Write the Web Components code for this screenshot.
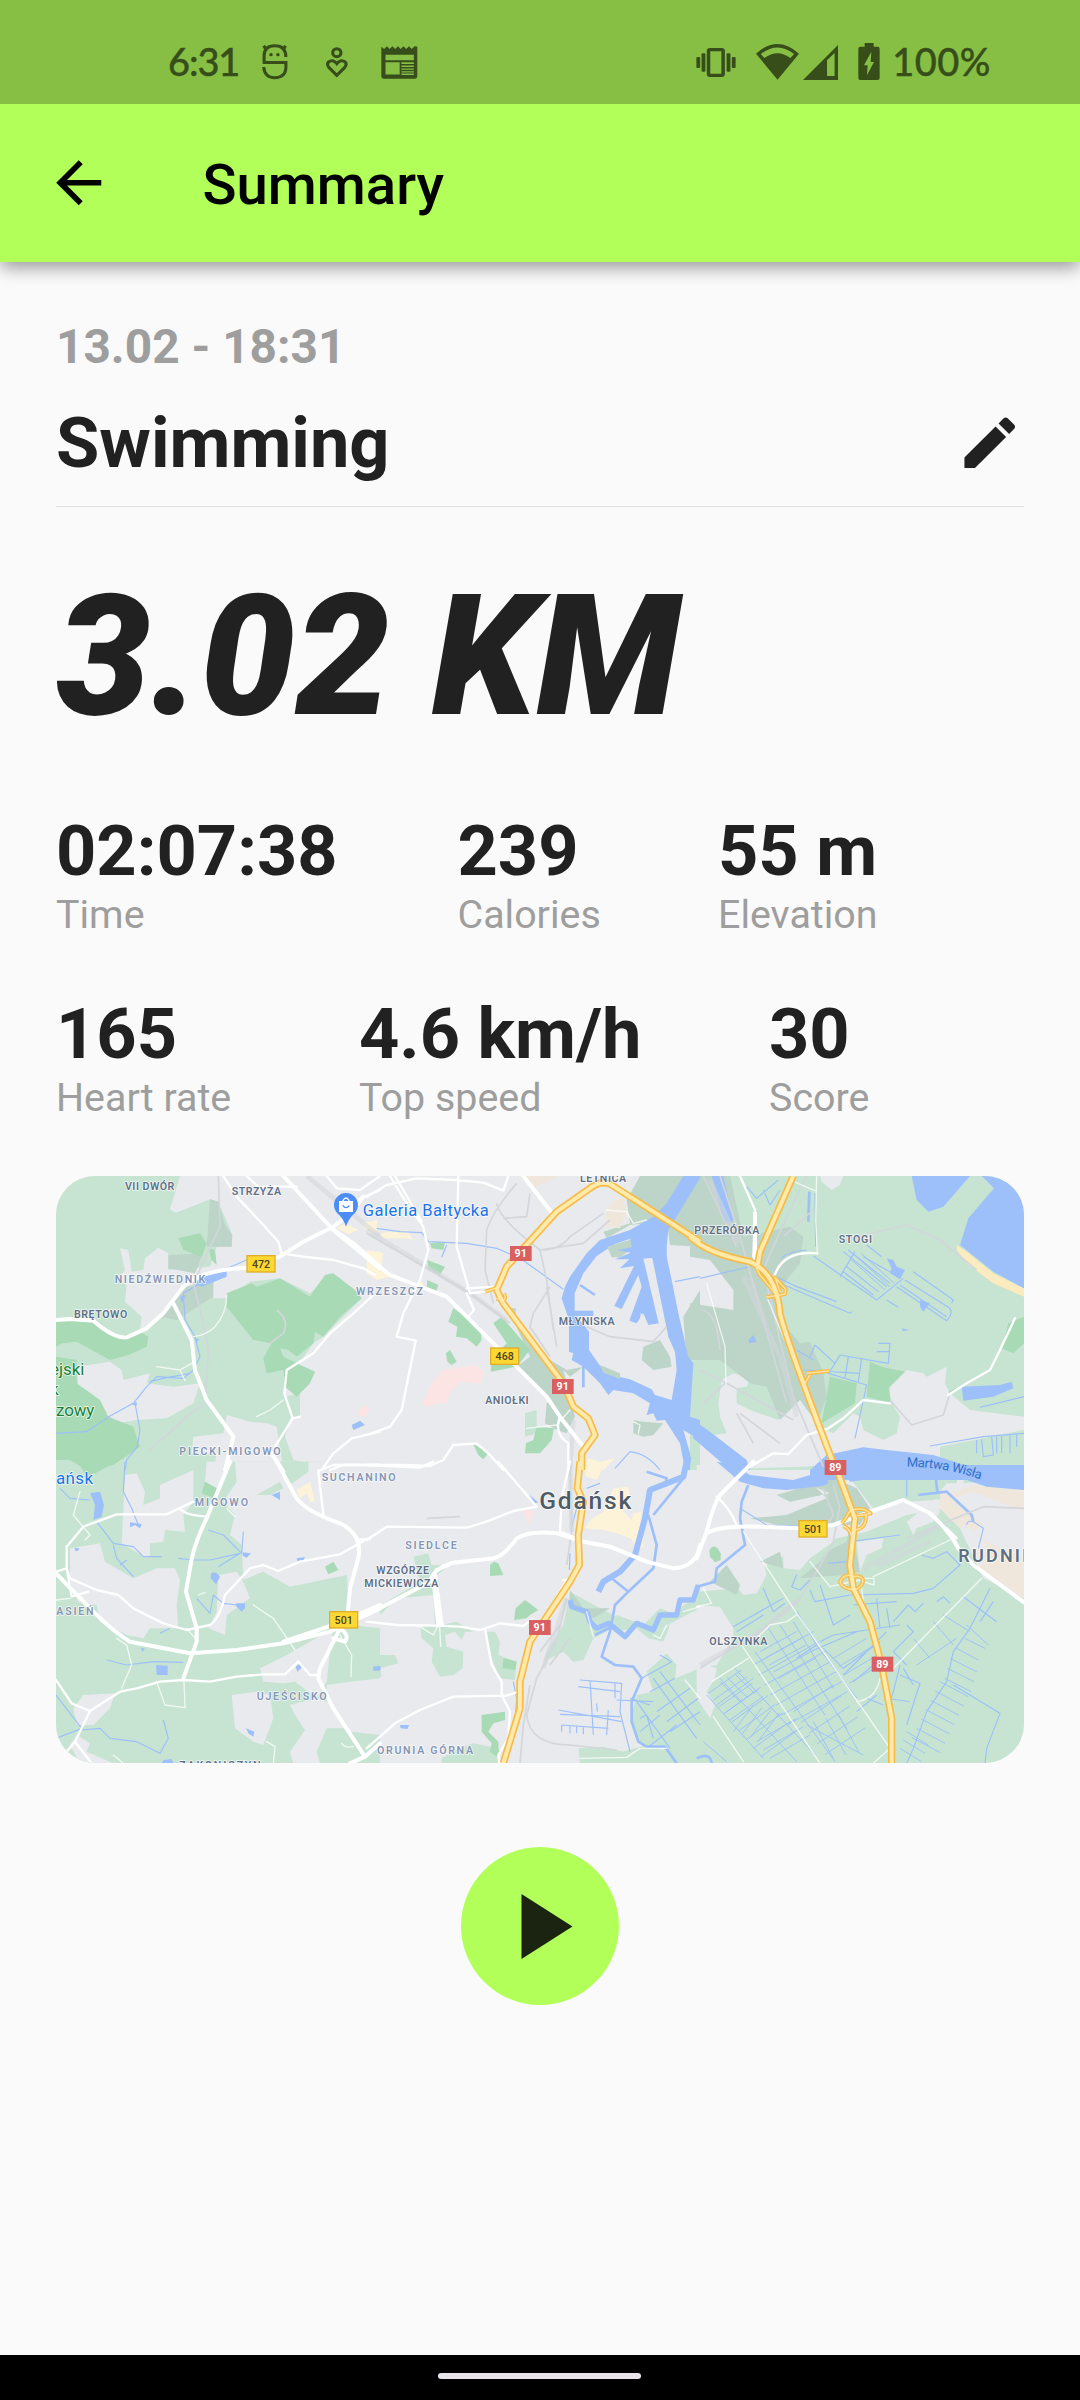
<!DOCTYPE html>
<html lang="en">
<head>
<meta charset="utf-8">
<title>Summary</title>
<style>
html,body{margin:0;padding:0;background:#fafafa}
body{width:1080px;height:2400px;overflow:hidden;font-family:Roboto,"Liberation Sans",sans-serif;color:#212121}
</style>
</head>
<body>
<workout-page></workout-page>
<script>
const define = (name, css, html) => customElements.define(name, class extends HTMLElement {
  constructor() {
    super();
    this.attachShadow({ mode: 'open' }).innerHTML = `<style>${css}</style>${typeof html === 'function' ? html(this) : html}`;
  }
});

define('status-bar', `
:host{display:flex;align-items:flex-start;height:104px;background:#86bf44;color:#374e1b;box-sizing:border-box;padding:0 89px 0 168px;font:500 38px/46px Lato,"Open Sans",sans-serif;position:relative;z-index:1}
svg{display:block;fill:#374e1b;flex:none}
.o{fill:none;stroke:#374e1b;stroke-width:9}
.time{margin-top:38px;width:69px;letter-spacing:-1.1px;white-space:nowrap;-webkit-text-stroke:.4px #374e1b}
.pct{margin-top:38px;margin-left:12px;letter-spacing:.5px;-webkit-text-stroke:.4px #374e1b}
.sp{flex:1}
`, `
<span class="time">6:31</span>
<svg style="margin:43px 0 0 24px" width="28" height="37" viewBox="759 130 81 111" preserveAspectRatio="none"><path class="o" d="M768 189V168Q768 138 799 138Q831 138 831 172M764 188.500H831V205Q829 234 799 234Q769 234 767 202"/><path class="o" stroke-width="10" d="M774 150L767 138M823 150L830 138"/><circle cx="788" cy="165" r="5"/><circle cx="808" cy="165" r="5"/></svg>
<svg style="margin:46px 0 0 36px" width="24" height="32" viewBox="944 137 70 96" preserveAspectRatio="none"><circle class="o" cx="978.500" cy="157" r="12"/><path class="o" d="M978.500 225L956 202Q948 193 954 185Q967 175 978.500 190Q990 175 1003 185Q1009 193 1001 202Z"/></svg>
<svg style="margin:46px 0 0 32px" width="37" height="33" viewBox="1105 138 107 97" preserveAspectRatio="none"><path fill-rule="evenodd" d="M1106 140L1114 147L1122 139L1130 147L1138 139L1146 147L1154 139L1162 147L1170 139L1178 147L1186 139L1194 147L1202 139L1210 140V226Q1210 234 1202 234H1114Q1106 234 1106 226ZM1118 164V180H1200V164ZM1118 186V222H1159V186ZM1164 186V191H1200V186ZM1164 195V200H1200V195ZM1164 204V208H1200V204ZM1164 212V216H1200V212ZM1164 219V223H1200V219Z"/></svg>
<span class="sp"></span>
<svg style="margin:48px 0 0 0" width="40" height="29" viewBox="455 144 115 87" preserveAspectRatio="none"><rect class="o" style="stroke-width:10" x="491" y="149" width="42" height="77" rx="4"/><rect x="471" y="160" width="11" height="55" rx="3"/><rect x="456" y="171" width="11" height="33" rx="3"/><rect x="543" y="160" width="11" height="55" rx="3"/><rect x="558" y="171" width="11" height="33" rx="3"/></svg>
<svg style="margin:44px 0 0 20px" width="43" height="36" viewBox="629 132 124 108" preserveAspectRatio="none"><path fill-rule="evenodd" d="M629 161Q691 103 753 161L691 239ZM643 162L653 174Q691 145 728 174L739 162Q691 123 643 162Z"/></svg>
<svg style="margin:45px 0 0 4px" width="35" height="35" viewBox="763 135 102 105" preserveAspectRatio="none"><path fill-rule="evenodd" d="M763 240L865 135V240ZM833 181V228H855V159Z"/></svg>
<svg style="margin:43px 0 0 20px" width="22" height="37" viewBox="922 129 66 111" preserveAspectRatio="none"><path fill-rule="evenodd" d="M942 129H969V140H981Q987 140 987 147V233Q987 240 981 240H929Q923 240 923 233V147Q923 140 929 140H942ZM962 155L940 196H951L949 226L970 186H960Z"/></svg>
<span class="pct">100%</span>
`);

define('app-bar', `
:host{display:flex;align-items:center;height:157.5px;box-sizing:border-box;padding:0 0 0 45px;background:#b2ff59;color:#000;box-shadow:0 7px 16px -1px rgba(0,0,0,.38);position:relative}
svg{width:67.5px;height:67.5px;display:block}
h1{margin:0 0 0 90px;font:500 56.25px/66px Roboto,sans-serif;position:relative;top:2px}
`, `
<svg viewBox="0 0 24 24"><path d="M20 11H7.83l5.590-5.590L12 4l-8 8 8 8 1.410-1.410L7.830 13H20v-2z"/></svg>
<h1><slot></slot></h1>`);

define('activity-head', `
:host{display:block;border-bottom:1.4px solid #e0e0e0;height:186px}
.date{font:700 47.8px/54px Roboto,sans-serif;color:#9e9e9e}
.row{display:flex;justify-content:space-between;align-items:center;margin-top:29px}
h2{margin:0;font:700 70.300px/80px Roboto,sans-serif}
svg{width:67.500px;height:67.500px;fill:#212121;margin-right:1px}
`, `
<div class="date"><slot name="date"></slot></div>
<div class="row"><h2><slot></slot></h2><svg viewBox="0 0 24 24"><path d="M3 17.250V21h3.750L17.810 9.940l-3.750-3.750L3 17.250zM20.710 7.040c.390-.390.390-1.020 0-1.410l-2.340-2.340c-.390-.390-1.020-.390-1.410 0l-1.830 1.830 3.750 3.750 1.830-1.830z"/></svg></div>`);

define('stat-item', `
:host{display:block;white-space:nowrap;color:#9e9e9e;font:400 39.4px/46px Roboto,sans-serif}
b{display:block;font:700 70.300px/80px Roboto,sans-serif;color:#212121;margin-bottom:1.6px}
`, el => `<b>${el.getAttribute('value')}</b><slot></slot>`);

/* The map is drawn on six sheets, three to a row; each key names the sheet its outlines belong to. */
const SHEETS = { A: [0, 0], B: [960, 0], C: [1950, 0], D: [0, 885], E: [960, 885], F: [1950, 885] };
const hatch = (x, y, dx, dy, n, sx, sy) => Array.from({ length: n }, (_, i) => `M${x + sx * i} ${y + sy * i}l${dx} ${dy}`).join('');
const HIGHWAY = {
  B: 'M635 900V850L675 795L655 745L610 710L580 640L400 400L380 360L410 290L460 235L560 125L660 55Q690 30 720 42L850 125L990 215',
  C: 'M-30 200Q20 250 150 275Q230 310 240 430Q255 500 400 880M280 18L180 245L172 290',
  E: 'M630 -10L622 70L640 110L625 210L628 300L600 350L480 530L450 650V730L400 895',
  F: 'M405 0L465 160L450 300L460 370L510 470L545 600L575 760V895'
};
const RAMPS = {
  B: 'M345 365L385 352M380 385Q415 400 402 370',
  C: 'M165 285L180 315L230 375M200 382L255 372L257 358L225 322L240 365M320 610L388 603M308 650L330 615',
  F: 'M425 175Q440 160 448 140Q480 120 512 145Q475 155 470 150M430 183Q450 190 455 215M498 150Q500 190 465 195M458 332Q428 325 420 352Q430 372 462 374M458 335Q490 330 489 350Q480 373 462 374'
};
const LAYERS = [
  ['land green', {
    A: 'M18 18H390L360 118L378 128L480 88L505 95L545 190V230H500L480 290L355 300L355 250L325 233L285 265L280 300L245 305L235 240L210 235L225 300L200 330L230 345L225 395L275 440L270 480L320 450L370 400L490 380L530 375L600 335L690 325L780 370L840 310L935 385L860 460L820 500L790 520L740 590L710 600L700 680L750 670V740L720 745L705 800L730 870L780 880L775 900H700L680 770L650 760L600 755L530 735L520 790L430 800L425 850L500 855L490 900H18Z',
    B: 'M465 730L500 720V790L465 800ZM930 650L990 560V740Z',
    C: 'M-30 18H972V900H-30V560L100 560L130 500L90 300L30 210L-30 180Z',
    D: 'M18 -10H990V895H18Z',
    E: 'M130 275L175 265L185 300L240 300L190 340L215 480L260 470L310 500L285 500L275 525L255 500L225 510L230 545L280 560L278 610L250 630L210 635L185 590L190 550L155 520L150 485L195 480L190 390L80 400L10 470L-10 465L0 440L100 380L150 350ZM-10 570L75 570L85 595L30 610L35 635L-10 640ZM345 500L375 500L390 530L385 570L440 590L435 645L390 640L365 580ZM215 880L270 850L310 835L385 850L390 900H215ZM600 380L690 430L740 455L730 490L670 520L640 585L610 590L580 560L520 590L530 560L580 480ZM740 450L820 480L870 430L920 450L940 420L990 400V430L930 460L860 500L900 480L880 530L835 520L800 490L730 500ZM830 620L890 565L920 600L915 640L990 610V900H920L880 850L820 850L780 770L800 690L850 680ZM625 850L700 845L760 860L830 840L900 860L920 895H630Z',
    F: 'M-10 380L120 370L180 310L320 240L500 200L620 150L780 120L800 -10H972V895H-10V610L50 600L100 520L80 460L-10 420ZM450 40L760 -10L780 100L620 110L520 130Z'
  }],
  ['land bare', {
    A: 'M80 590L180 575L215 600L220 630L300 610L290 640L370 650L450 640L430 700L350 745L260 750L170 765L140 690L85 650ZM415 330L490 340V385H530L600 335L530 290L470 290Z',
    B: 'M910 230L990 240V350L950 430L920 380Z',
    C: 'M0 270L50 290L110 355L100 420L60 420L20 340L0 350ZM65 630L100 610L150 625L140 650L110 655L110 700L150 720L235 750L255 680L270 700L300 690L340 700L360 770L400 790L460 730L480 740L490 780L550 810L590 790L600 740L570 690V650L620 600L670 610L680 620L740 590L735 640L750 670L810 720L972 740V780L720 830V870L300 890L0 900V800L80 790L60 740L55 700ZM360 18H430L420 45L395 60L365 35Z',
    D: 'M225 30L260 25L285 80L280 120L330 100L330 60L430 15L430 110L400 150L405 200L345 195L340 230L300 235L300 270L290 280L215 235ZM60 250L150 235L165 290L250 340L320 310L375 310L390 345L380 420L385 490L300 490L280 520L230 510L150 470L140 420L85 410L60 350ZM505 330L560 320L580 350L600 400L530 450L525 510L475 490L500 440ZM555 -10H990V490L900 480L890 330L720 365L640 320L580 345L575 240L540 210L555 150L520 110L560 50ZM470 -10H550L500 70L465 50ZM850 490L710 570L630 610L640 650L700 655L735 650L800 700L830 650L840 560ZM830 660L900 650L990 640V810L900 800L830 700ZM545 690L620 680L660 690L670 760L640 840L610 830L555 790ZM720 720L800 700L860 720L900 790L830 790L800 860L810 895H730L720 860L765 795L735 750ZM100 690L195 685L180 730L130 780L80 780L70 730ZM60 840L80 810L120 835L110 860L190 895H90Z',
    F: 'M-10 0H80L140 60L200 70L240 110L390 90L380 130L300 160L440 180L400 230L330 280L300 315L250 310L250 265L190 290L200 330L170 385L130 390L100 350L80 300L-10 350ZM480 320L470 230L550 220L545 250L500 270ZM-10 420L60 425L100 490V520L50 560L20 600L50 610L45 640L20 680L45 720L30 760L-10 700ZM720 80L740 55L972 50V400L850 340L780 190L720 130ZM620 170L710 100L720 140L700 170L650 190L640 210Z'
  }],
  ['land green', { D: 'M690 -10H775L775 20L720 60L700 20ZM620 90L690 50L700 70L660 90Z' }],
  ['land port', {
    A: 'M480 88L505 95L525 165L547 195L545 230H470ZM355 255L460 250L435 310L355 295ZM330 440L410 350L490 330L490 380L450 405L380 450Z',
    B: 'M810 18H960L870 140L830 160L780 165L710 205L700 185L780 160L770 90ZM890 150L990 30V230L900 225ZM415 415H437V440L490 540L590 600L640 590L600 620L580 600L615 740L590 790L560 780L525 760L530 700L545 690L440 590L480 560ZM940 440L990 360V560L950 570Z',
    C: 'M-30 18H90L130 200L270 170L310 200L300 280L260 330L240 360L240 450L300 520L330 515L370 610L380 680L350 760L300 690L240 750L200 650L150 640L100 600L60 570L-30 570V400L100 420V360L30 270L-30 260Z',
    E: 'M600 375L640 430L720 430L670 460L600 420Z',
    F: 'M340 60L400 40L470 70L510 130L480 180L430 180L250 185L150 160L260 150L380 100ZM300 340L360 290L380 260L440 230L450 180L480 320L430 330ZM180 290L240 260L250 310ZM30 350L80 300L120 360L110 390ZM230 90L270 110L390 85L330 60Z'
  }],
  ['land wood', {
    A: 'M385 205L450 190L470 220L455 260L400 240ZM475 235L495 240L500 285L485 270ZM530 370L605 340L620 350L690 325L780 380L800 350L825 315L850 310L915 360L935 385L870 440L820 500L795 485L790 520L740 560L715 540L690 535L700 560L740 580L795 605L780 640L740 680L705 650L700 600L650 610L640 565L665 520L610 510L570 460L530 410ZM18 455L130 450L200 500L270 485L295 500L290 530L235 555L180 570L80 515L35 520L18 530ZM18 560L80 570V640L150 690L175 740L250 770L270 830L190 885L110 900L60 870H18Z',
    B: 'M180 220L225 215L220 240L185 235ZM172 270L225 290L210 315L175 300ZM172 330L205 345L200 362L170 355ZM250 415L330 470L335 510L320 530L290 505L258 500L262 470L235 455ZM370 460L395 440L480 540L440 590L362 605L365 570L410 520ZM228 550L240 540L260 575L245 585L232 575ZM500 770L552 775L545 810L510 850L465 850L468 820L490 810ZM308 820L355 850L340 868L325 855Z',
    C: 'M390 620L470 640L465 700L365 760ZM510 575L545 590L615 605L565 655L575 700L500 680ZM925 460L972 440V520L940 550L905 535ZM745 665L800 640L790 650L750 672Z',
    D: 'M85 -10L200 -10L110 38ZM465 50L500 70L490 98L455 85ZM825 305L850 290L865 315L835 328Z',
    E: 'M437 430L465 405L505 435L480 450L470 460L432 465ZM360 300L372 290L385 295L400 330L360 333ZM400 580L440 590L435 615L398 610ZM335 750L405 740V765L370 775L355 800L385 830L387 880L360 860L365 835L335 800Z',
    F: 'M28 255Q45 230 62 265V285L45 292L30 275Z'
  }],
  ['land hospital', {
    A: 'M925 720L945 705L960 715L945 740L925 735Z',
    B: 'M155 700L185 640L220 600L320 585L340 605L335 640L275 635L240 665L230 700L200 700L175 712Z',
    E: 'M462 135L495 138L475 180Z'
  }],
  ['land town', {
    A: 'M860 175L885 160L925 180L895 192ZM940 155L985 155L965 185L940 170ZM950 245H990V320L970 300Z',
    B: 'M-10 160L20 150V185L-10 190ZM30 190L110 180L130 210L110 205L40 205ZM-10 240L40 250L35 285L60 320L20 330L-10 310ZM150 325L160 345L140 345ZM655 865L690 875L735 865L700 900H640Z',
    D: 'M740 75L780 50L795 110H780L770 85L750 100Z',
    E: 'M640 10L700 5L680 45L650 35ZM730 70L775 65L780 90L760 140L785 165L790 145L815 140L805 210L820 215L818 250L790 235L785 222L740 205L700 195L645 190L660 165L700 140Z'
  }],
  ['land sand', {
    B: 'M460 18H570L490 55ZM730 90L760 85L770 130L750 175L705 170L710 125Z',
    F: 'M820 60L972 75V400L840 310L860 240L820 200L720 130L730 90ZM720 80L760 100L820 160L780 190L720 130Z'
  }],
  ['land beach', { C: 'M770 225L800 245L880 310L972 355V380L880 340L800 280L770 240Z' }],
  ['land bare', { F: 'M820 80L972 140V280L860 230L820 200L850 180L760 100Z' }],
  ['land sea', {
    A: 'M470 315L530 300V320L455 350L430 340ZM390 380L408 375L395 400ZM432 505L448 508L440 515ZM905 765L930 752L945 765L910 780ZM243 702L260 696V708Z',
    B: 'M890 100L940 18H990V25L895 180L888 250L905 330L925 430L955 560L970 580L960 740L990 750V810L940 780L960 850V900H945L930 820L885 750L860 752L850 730L830 735L840 700L790 670L730 660L715 675L690 640L640 590L605 570L610 550L597 545V450L575 385L585 350L600 320L650 250L690 210L780 180L850 140Z',
    C: 'M35 18H70L100 150Q88 165 72 155L55 90ZM635 18H810L730 110L685 125L650 90ZM845 18H972V355L880 305L780 225L805 145L882 55ZM-20 750L30 785L140 870L150 900H90L-20 805ZM330 900L380 855L490 832L560 840L700 855L810 890L972 885V930H330ZM145 510L160 495L170 515L148 520ZM560 265L580 270L590 290L615 300L600 328L570 310L575 295ZM660 390L690 400L670 425L660 410ZM785 650L900 645L935 635L940 655L880 680L790 692ZM605 475L628 480L610 484Z',
    D: 'M120 85L150 80L162 120L155 155L130 165L135 120ZM240 172L275 178L270 190L255 180L240 187ZM74 248L88 250L84 258L75 257ZM318 600L353 602V630H320ZM483 325Q495 315 510 335L498 358L482 340ZM665 90L690 80V105ZM560 415L585 415V430L575 440L555 420ZM578 262L603 265L590 278L578 272ZM740 280L765 276L760 286L742 288ZM737 605L750 595L755 608L742 620ZM588 790L613 800L610 815L595 805ZM340 885L365 882L370 895H335ZM970 605L990 602V617H970ZM273 549L284 550L278 562Z',
    E: 'M10 605L32 605V615H10ZM90 780L118 780L112 792L92 790ZM478 90L505 112L495 115Z',
    F: 'M50 -10L100 0L150 30L280 45L380 15L385 55L370 62L260 75L190 70L120 50ZM430 10L450 50L560 35L690 25L740 25L860 65L972 75V0H430Z'
  }],
  ['land bare', { B: 'M735 222L785 205L850 205L870 300L882 400L895 480L915 545L920 600L905 690L855 675L845 658L780 628L720 614L692 590L657 540V485L614 430V370L640 310L680 258Z' }],
  ['land port', { B: 'M712 230L785 208L790 235L750 262L725 262ZM820 530L870 510L900 560L905 590L850 600L815 570ZM690 585L750 610V627L700 608ZM790 750L820 755L880 760L850 795L820 800L790 790Z' }],
  ['land sea', { B: 'M780 200H855L862 262L820 266L866 460L835 465L820 430L800 460L778 452L815 350L805 315L755 417L733 408L792 288L750 295L778 268L735 268L782 248L742 240L785 232ZM845 255L890 230V340L915 545L895 500Z' }],
  ['land bare', { B: 'M808 466L812 430L818 432L812 468Z' }],
  ['water w10', { B: 'M605 430H670', E: 'M600 405L605 425L650 440L660 470L680 490L715 475L735 490L765 515L800 475L850 495L870 450H920L930 405H970L985 360' }],
  ['water w22', { E: 'M950 -10L940 35L840 75L825 160L795 270L750 320L700 350L685 380' }],
  ['water w7', {
    B: 'M640 585V652M630 345L675 375M960 860L955 900',
    C: 'M328 65L325 155',
    E: 'M835 150L860 240L850 310L775 380L735 420L720 500L695 575L735 600L790 605L815 640L785 710V770L805 830L830 845H885L920 895M830 20L890 40L885 65M940 40L850 150M725 340L775 380M675 510L735 480',
    F: 'M145 60L125 110L120 160L135 240L50 310L45 350L-10 365M655 90L740 80L815 150L820 170M705 20L712 80M-10 880Q30 860 35 895'
  }],
  ['water w4', {
    A: 'M590 270L520 300L400 370L405 450L435 500L450 560L430 600L400 625L320 620L290 650L250 700L180 738L110 785L18 790M255 700L270 780L262 830L230 870L225 900M300 635L340 625L420 610',
    B: 'M20 175L90 185L155 188L175 215L290 220L380 235L450 265L500 300L580 358M215 262L230 225M735 895L780 845Q830 850 870 900M915 335L990 320',
    C: 'M345 70L347 230M140 50L170 85L235 30M190 60L210 105L240 60M230 320L290 350L410 395M240 340L450 430L455 425M245 265Q260 245 320 240M430 245L560 350M445 240L570 340M465 245L420 320M340 258L530 390L610 325M490 260L560 300L590 315M500 225L545 260M440 290L535 365M430 305L520 375M640 305L760 390L755 400M615 330L750 415Q760 430 740 452L590 350M600 345L740 440M560 390L595 412M345 525L405 580L420 555L565 580L570 520H535M530 545H570M405 580L385 610L500 645L465 805M345 525L330 560M445 560L435 625M485 565L475 635M310 600L480 610M290 540L340 570M0 325L150 290M840 712L972 680M690 828L850 800L972 790M830 810V850M845 808L850 860L880 855L875 800M890 800V850M905 798V850M930 795V850M950 795V830',
    D: 'M30 70L60 100L120 105M225 -10L220 80L245 130L265 180M140 170L190 235L250 245L280 275L335 275M190 240L200 280L250 335M210 300L230 285M385 280L430 285L480 285L570 265L505 305M475 195L520 210L575 265L580 200M440 400L480 445L490 390L520 415L560 420M170 585L230 600L310 590L400 592M18 690L95 790L18 820M95 795L150 790L180 820L260 830L330 865L355 820L340 765M330 505L360 490',
    E: 'M600 265L598 315M430 650L440 700L435 770M605 185L620 130M650 70L690 55M630 645L755 655L750 740L780 860M625 665L750 680M660 645L670 810M565 735L755 770M570 748L750 755M575 780L715 790M715 735L710 810M735 655V700M740 705L850 710M575 780V800M600 780V805M620 782V805M640 785V808M680 715L682 740M815 640L905 590L870 570M800 710L900 850M810 760L830 750L850 820M850 640L980 820M870 620L990 780M840 680L915 640M860 740L960 670M890 770L985 700M900 800L990 740M780 700L840 720M810 800L870 750M830 850L920 780',
    F: 'M620 30V95M800 180Q800 165 820 170L850 190L835 250M120 130L200 180L330 185M450 230L600 210M385 295L440 290M100 485L250 400M110 500L190 450M190 370L220 440L255 415M290 330L275 365L300 375L330 345M330 375L345 410L450 390L640 385L700 370L780 300L740 260L700 280L665 270M360 360L400 480L450 450M290 440L350 540L470 700M350 540L290 580M330 560L470 500M360 530L400 510L600 480M370 550L430 610L540 530M430 630L560 500M460 650L520 600M530 400L540 490M590 410L460 420M560 430L570 490M580 470L625 420L645 440L670 415M620 480L640 500L580 560L620 600M710 410L730 395L750 415M790 395L890 470M870 370L810 490L760 560L740 650L680 740L640 850L620 895M880 410L840 470M500 700L550 720M470 740L530 690M760 660L900 745L860 850L855 895M600 600L580 680L560 740M600 630L660 655L620 780M610 610L640 660'
  }],
  ['water w3', {
    F: hatch(60, 640, 230, 250, 1, 0, 0) + hatch(20, 690, 170, 190, 1, 0, 0) + hatch(105, 610, 240, 260, 1, 0, 0) + hatch(10, 830, 70, 60, 1, 0, 0)
      + hatch(50, 720, 110, -80, 7, 22, 26) + hatch(25, 685, 100, -70, 5, 16, 20) + hatch(160, 600, 180, -100, 7, 17, 30)
      + hatch(205, 490, 170, 260, 1, 0, 0) + hatch(240, 480, 200, 310, 1, 0, 0) + hatch(165, 560, 240, 330, 1, 0, 0) + hatch(280, 470, 120, 200, 1, 0, 0)
      + hatch(280, 740, 120, -80, 5, 24, 32) + hatch(180, 560, 110, -60, 5, 14, 20) + hatch(400, 580, 100, -60, 4, 16, 25)
      + hatch(320, 780, 170, 90, 1, 0, 0) + hatch(340, 770, 60, 110, 3, 38, -10) + hatch(170, 830, 120, -70, 3, 20, 25)
      + hatch(730, 450, 80, 50, 1, 0, 0) + hatch(800, 480, 65, 60, 1, 0, 0) + hatch(795, 520, 60, 30, 1, 0, 0) + hatch(770, 550, 65, 35, 1, 0, 0)
      + hatch(750, 580, 80, 40, 3, -8, 30) + hatch(720, 650, 85, 45, 7, -14, 28) + hatch(560, 700, 70, 10, 1, 0, 0) + hatch(620, 800, 65, 40, 3, -10, 25)
      + hatch(640, 520, 50, 60, 1, 0, 0) + hatch(700, 470, 60, 70, 1, 0, 0) + hatch(650, 600, 120, -80, 1, 0, 0)
      + hatch(60, 650, 60, 60, 3, 22, -12) + hatch(100, 800, 60, -80, 4, 26, 8),
    C: hatch(455, 270, 100, 90, 3, 14, -10)
  }],
  ['rail', {
    A: 'M505 18L510 170L430 340L460 460L475 540L465 700L410 740L300 840M680 420Q720 450 700 490L660 520',
    B: 'M-10 190L300 370L420 460M440 40Q370 120 350 180L345 300L370 400M380 100Q390 150 510 240L530 330L550 480M510 240L640 220L720 150M510 240Q570 240 600 200L700 130M480 70L470 140L400 145M540 350L490 430L480 470L540 560M530 350L560 530M650 470L720 500L850 515L890 470',
    C: 'M320 18L260 140L190 300L280 680L370 890M60 18L120 200L260 700M0 420Q50 420 60 540M0 600L80 640L280 750M10 18L110 230M340 120L250 200M430 210L620 165L720 210L830 300M570 690L635 765L730 735L750 670M75 640L10 700M110 730L160 820M120 730L240 820',
    E: 'M590 400L560 530L500 640L470 750Q480 840 600 840L740 855M570 480L510 560M600 520L540 600M480 660L460 780L450 895M600 -10L605 200L590 300M170 160L270 155',
    F: 'M0 610L180 500L300 400L350 320L400 230L420 120M620 220L850 125L972 130M370 70L400 150L380 180M400 60L420 130'
  }],
  ['rail thick', { A: 'M770 18L990 200', B: 'M-10 180L300 370L410 450M610 750L600 900', C: 'M30 30L115 220M130 320L240 560L290 740M150 320L210 500', E: 'M600 -10L605 200M590 400L520 610', F: 'M490 310L620 240L720 180M530 305L690 230M0 600L180 500L290 410' }],
  ['road w5', {
    A: 'M530 375Q530 430 495 470Q470 495 430 500M320 590L390 600L425 580M390 600L405 632M620 740L660 720L700 690',
    B: 'M470 775L560 765L600 720M710 120L770 125L790 160L830 150M790 755L810 765L805 790',
    C: 'M270 30L345 62M350 18L347 150L352 250M20 340L75 530L78 640M200 380L250 500L300 620',
    D: 'M90 80L70 150L120 210L105 225M200 520L230 540L245 600L215 670M320 650L345 720L405 728L402 650M610 420L670 460L735 555M870 510L905 570L903 635M650 830L675 845L670 895M875 835Q885 850 910 845M190 870L220 895M18 405L60 400M445 390L465 382M530 130L555 155M410 490L440 525',
    E: 'M650 440L670 515M850 510L870 520L890 480M940 440L990 425M630 880L770 877L810 850H890M945 645L990 700M205 400L212 545M150 485L190 510L205 480',
    F: 'M130 200L280 430L480 720L570 850L520 895M125 540L360 895M330 290L390 365L480 345M490 340H522V360L490 350M520 335L750 225M845 340L580 610M35 650L145 580M170 520L210 480L260 470L290 450M470 710Q530 700 540 640M40 755L130 890M10 370L35 415L-10 425M485 370L490 410'
  }],
  ['road w8', {
    A: 'M520 18L560 80L640 165L685 215L695 250L760 260L850 270L940 295L975 315M970 375L910 430L840 490L790 550L710 600L703 670L728 745L675 830M728 745L750 740M815 900L850 850L905 805L990 785M590 18L640 65M830 18L860 55L930 60L990 18M640 50L740 50M920 90L990 60M840 900L880 885H990',
    B: 'M60 18L110 100L160 170L175 240L150 330L100 430L80 500L137 512L95 720L60 770L-10 795M-10 80L50 45L140 25L260 30L340 38L400 62L415 18M75 18L155 155M265 18L260 230L300 370L345 365M290 370L312 420L295 440M290 355L380 350M-10 885H100L180 888L220 870L250 825L320 820L360 855L400 900M570 740Q550 790 595 820V900',
    C: 'M120 18L165 120L160 260M352 250Q240 240 220 330M150 890L220 850L265 852L320 795L385 775L430 745L490 690L570 700M945 445L900 540L870 600L800 640L745 675',
    D: 'M50 250L50 310L60 340L140 375L205 390L250 430L340 475L410 495L480 480Q510 460 525 390L600 310L640 300L685 318L750 290L870 268L920 240L990 200M18 320L50 310L65 395L115 380M200 148L100 185L50 245M200 148H350L430 110M390 130Q400 150 470 155M805 18L820 150M805 18L850 0H990M18 645L65 715L120 738L210 680L260 670L330 650L400 645L480 650L560 635L640 628H705L745 590L780 630L810 630M120 738L75 830L50 860M75 830L125 895M920 225L960 222',
    E: 'M-10 470L80 480L200 482L270 485L330 495L390 475L460 483L490 460M345 490L365 600L395 650L395 690L420 740L415 820L385 870L388 895M-10 850L75 775L150 735L250 695L410 692L445 680M-10 225L50 185L290 188L350 170L430 138L500 125L385 -10M-10 0L150 8L190 -10M600 -10L575 100L570 200L620 220M590 345L545 420L520 460M580 345L600 350',
    F: 'M50 95Q90 130 110 180M740 190L770 220'
  }],
  ['road w13', {
    A: 'M18 450L60 447L130 452Q190 505 230 502L290 475L340 430L400 350Q450 300 590 293L690 260L760 215L850 170L890 140L940 80M370 400L425 510L435 600L470 690L550 800L525 900M700 18L850 180L990 295M665 850L700 905M845 175L910 220L990 290',
    B: 'M-10 260L60 315L230 380L290 440L420 570L530 680L570 740L640 830M460 18L550 135',
    C: 'M165 130V270',
    D: 'M18 325L130 440Q190 500 240 530L420 565L560 555L700 535L840 500L990 430M540 -10L470 160Q430 240 420 310L408 380L440 490V530L400 640M680 -10L740 100Q770 140 870 175Q940 210 925 280L900 370L893 450M870 490L810 610L805 640L850 730L945 875L990 835M945 875L900 895M700 530L850 480L990 420M870 490Q900 510 885 530L850 520',
    E: 'M-10 450L180 350Q190 310 250 293L370 280Q400 275 440 220Q480 195 560 205L640 230L720 245L830 290L910 310Q980 305 990 240M190 340L205 480M195 330L215 480M200 315L235 300',
    F: 'M160 -10L60 90Q40 120 20 200L-10 280M20 205Q60 180 180 185L300 190L400 180L610 105L690 145Q750 200 775 250L820 300L972 412'
  }],
  ['ramp-edge', RAMPS],
  ['hw-edge', HIGHWAY],
  ['ramp', RAMPS],
  ['hw', HIGHWAY]
];
/* sheet, x, baseline, width, size, class, text */
const NAMES = [
  ['A', 225, 60, 148, 32, 'd', 'VII DWÓR'], ['A', 545, 76, 148, 32, 'd', 'STRZYŻA'], ['A', 194, 338, 272, 32, 's', 'NIEDŹWIEDNIK'],
  ['A', 72, 444, 160, 32, 'd', 'BRĘTOWO'], ['A', 388, 856, 304, 32, 's', 'PIECKI-MIGOWO'], ['A', 918, 376, 201, 32, 's', 'WRZESZCZ'],
  ['A', 938, 138, 378, 49.5, 'b', 'Galeria Bałtycka'], ['B', 630, 37, 138, 32, 'd', 'LETNICA'], ['B', 566, 464, 168, 32, 'd', 'MŁYNISKA'],
  ['B', 346, 703, 130, 32, 'd', 'ANIOŁKI'], ['C', -17, 193, 195, 32, 'd', 'PRZERÓBKA'], ['C', 416, 220, 100, 32, 'd', 'STOGI'],
  ['D', 434, 122, 160, 32, 's', 'MIGOWO'], ['D', 815, 47, 222, 32, 's', 'SUCHANINO'], ['D', 19, 450, 112, 32, 's', 'ASIEŃ'],
  ['D', 620, 705, 210, 32, 's', 'UJEŚCISKO'], ['D', 388, 911, 244, 32, 'd', 'ZAKONICZYN'], ['E', 106, 251, 154, 32, 's', 'SIEDLCE'],
  ['E', 19, 327, 158, 32, 'd', 'WZGÓRZE'], ['E', -17, 366, 222, 32, 'd', 'MICKIEWICZA'], ['E', 21, 868, 288, 32, 's', 'ORUNIA GÓRNA'],
  ['E', 508, 132, 276, 74, 'c', 'Gdańsk'], ['F', 28, 541, 174, 32, 'd', 'OLSZYNKA'], ['F', 775, 292, 226, 54, 'r', 'RUDNIK'],
  ['A', 0, 614, 103, 51, 'p', 'ejski'], ['A', 0, 676, 26, 51, 'p', 'k'], ['A', 18, 737, 115, 51, 'p', 'zowy'], ['D', 18, 57, 111, 51, 'b', 'ańsk']
];
/* sheet, x, y, road number */
const SHIELDS = [['A', 589, 255, 472], ['B', 360, 532, 468], ['D', 837, 438, 501], ['F', 295, 165, 501], ['B', 420, 228, 91], ['B', 546, 627, 91], ['E', 477, 465, 91], ['C', 374, 870, 89], ['F', 515, 575, 89]];

define('route-map', `
:host{display:block;width:968px;height:587px;border-radius:39px;overflow:hidden;background:#e8eaed}
svg{display:block;width:100%;height:100%}
.land{stroke:none}.green{fill:#c6e4d1}.bare{fill:#e8eaed}.port{fill:#bdd4c8}.wood{fill:#a7dab5}.hospital{fill:#fce4e4}.town{fill:#fdf3d8}.sand{fill:#f0e7dc}.beach{fill:#fcebbf}.sea{fill:#9dc0fa}
.water,.road,.rail,.hw,.hw-edge,.ramp,.ramp-edge{fill:none;stroke-linejoin:round}
.water{stroke:#9dc0fa}.road{stroke:#fff;stroke-linecap:round}
.w22{stroke-width:18}.w13{stroke-width:12}.w10{stroke-width:16}.w8{stroke-width:7}.w7{stroke-width:8}.w5{stroke-width:4}.w4{stroke-width:3.500}.w3{stroke-width:2.800}
.road.w5{opacity:.75}
.rail{stroke:#d3d6da;stroke-width:5}.rail.thick{stroke-width:14;opacity:.55}
.hw-edge{stroke:#f7bc45;stroke-width:22}.hw{stroke:#ffe9ab;stroke-width:12}
.ramp-edge{stroke:#f7bc45;stroke-width:12}.ramp{stroke:#ffe1a0;stroke-width:4.500}
text{font-family:Roboto,sans-serif;font-weight:600;paint-order:stroke;stroke:#fff;stroke-opacity:.8;stroke-width:5;stroke-linejoin:round}
.d{fill:#5f6f87}.s{fill:#8595b4}.b{fill:#1a73e8;font-weight:400}.p{fill:#188038;font-weight:400}.c{fill:#4f5b66;font-weight:500}.r{fill:#5f6f80}
.n{stroke:none;text-anchor:middle;font-size:32px;font-weight:500}
`, () => {
  const at = k => `transform="translate(${SHEETS[k]})"`;
  const shapes = LAYERS.map(([cls, sheets]) => Object.entries(sheets).map(([k, d]) => `<path class="${cls}" ${at(k)} d="${d}"/>`).join('')).join('');
  const names = NAMES.map(([k, x, y, w, size, cls, t]) => `<text class="${cls}" ${at(k)} x="${x}" y="${y}" textLength="${w}" font-size="${size}">${t}</text>`).join('');
  const shields = SHIELDS.map(([k, x, y, n]) => n > 99
    ? `<g ${at(k)}><rect x="${x + 2}" y="${y + 2}" width="84" height="49" fill="#fdd835" stroke="#e0ae28" stroke-width="4"/><text class="n" fill="#4a4420" x="${x + 44}" y="${y + 38}">${n}</text></g>`
    : `<g ${at(k)}><rect x="${x}" y="${y}" width="65" height="45" fill="#d95f60"/><text class="n" fill="#fff" style="font-weight:700" x="${x + 32}" y="${y + 34}">${n}</text></g>`).join('');
  return `<svg viewBox="18 18 2904 1761" preserveAspectRatio="none">${shapes}
  <path id="river" d="M2570 890Q2680 890 2798 930" fill="none"/><text font-size="39" style="fill:#2d6fc9;stroke:none;font-weight:400" textLength="226"><textPath href="#river">Martwa Wisła</textPath></text>
  ${names}${shields}
  <path d="M888 170Q880 145 862 130A36 36 0 1 1 914 130Q896 145 888 170Z" fill="#4c8df6"/><path d="M867 93H909V126H867Z" fill="#fff"/><path d="M879 95V91Q888 77 897 91V95" fill="none" stroke="#fff" stroke-width="4"/><path d="M878 106Q888 120 898 106" fill="none" stroke="#4c8df6" stroke-width="4"/>
  </svg>`;
});

define('play-button', `
:host{display:flex;align-items:center;justify-content:center;width:158px;height:158px;border-radius:50%;background:#b2ff59}
svg{width:52px;height:65px;margin-left:14px;margin-top:2px;fill:#1b2410;display:block}
`, `<svg viewBox="0 0 52 65" preserveAspectRatio="none"><path d="M.5 0L51.500 32.500L.5 65Z"/></svg>`);

define('nav-bar', `
:host{display:flex;justify-content:center;align-items:flex-start;height:45px;background:#000}
i{width:203px;height:6px;border-radius:3px;background:#e8e6ea;margin:18px 1px 0 0}
`, `<i></i>`);

define('workout-page', `
:host{display:flex;flex-direction:column;width:1080px;height:2400px;background:#fafafa;overflow:hidden}
main{flex:1;display:flex;flex-direction:column;padding:58px 56px 0}
.distance{font:italic 900 168.750px/198px Roboto,sans-serif;margin-top:50px;white-space:nowrap}
.stats{display:flex;height:126px}
.first{margin-top:56px}
.second{margin-top:57px;margin-bottom:56px}
play-button{align-self:center;margin-top:84px}
`, `
<status-bar></status-bar>
<app-bar>Summary</app-bar>
<main>
<activity-head><span slot="date">13.02 - 18:31</span>Swimming</activity-head>
<div class="distance">3.02 KM</div>
<div class="stats first"><stat-item value="02:07:38" style="width:401.5px">Time</stat-item><stat-item value="239" style="width:260.5px">Calories</stat-item><stat-item value="55 m">Elevation</stat-item></div>
<div class="stats second"><stat-item value="165" style="width:303px">Heart rate</stat-item><stat-item value="4.6 km/h" style="width:410px">Top speed</stat-item><stat-item value="30">Score</stat-item></div>
<route-map></route-map>
<play-button></play-button>
</main>
<nav-bar></nav-bar>`);
</script>
</body>
</html>
